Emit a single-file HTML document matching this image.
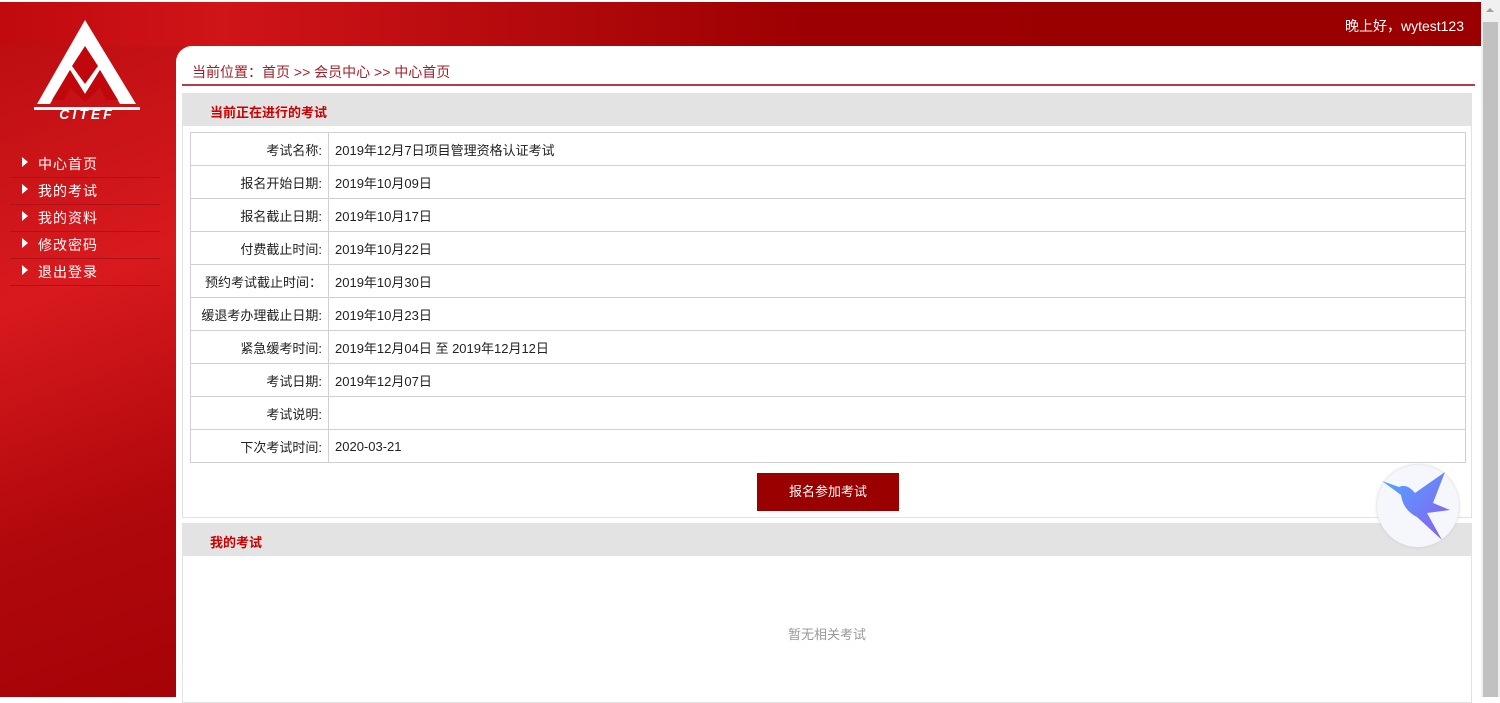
<!DOCTYPE html>
<html><head><meta charset="utf-8"><style>
*{margin:0;padding:0;box-sizing:border-box}
body{width:1500px;height:697px;overflow:hidden;position:relative;background:#fff;font-family:"Liberation Sans","Noto Sans CJK SC",sans-serif;font-size:13px;color:#333}
.bg{position:absolute;left:0;top:0;width:1481px;height:697px;background:linear-gradient(160deg,#b80c10 0%,#d81a1e 25%,#b0080c 45%,#a00005 70%,#9a0003 100%)}
.bg2{position:absolute;left:0;top:0;width:1481px;height:46px;background:linear-gradient(90deg,#c00a0e 0%,#d01418 15%,#b40a0d 35%,#9c0002 55%,#9a0000 100%)}
.topline{position:absolute;left:0;top:0;width:1481px;height:2px;background:#fff}
.greet{position:absolute;right:36px;top:16px;color:#fff;font-size:14px}
.panel{position:absolute;left:176px;top:46px;width:1305px;height:651px;background:#fff;border-top-left-radius:16px}
.crumb{position:absolute;left:192px;top:62px;color:#a0202a;font-size:14px}
.cline{position:absolute;left:182px;top:84px;width:1293px;height:2px;background:#b04048}
.box{position:absolute;left:182px;width:1290px;border:1px solid #e2e2e2}
.hd{position:absolute;left:182px;width:1290px;height:33px;background:#e3e3e3;color:#c00;font-weight:bold;font-size:13px;padding:9px 0 0 28px}
table{position:absolute;left:190px;top:132px;width:1276px;border-collapse:collapse}
td{border:1px solid #d0d0d0;height:33px;font-size:13px;color:#222}
td.l{width:138px;text-align:right;padding-right:6px}
td.r{padding-left:6px}
.btn{position:absolute;left:757px;top:473px;width:142px;height:38px;background:#9a0000;color:#fff;font-size:13px;text-align:center;line-height:38px}
.none{position:absolute;left:788px;top:624px;color:#999;font-size:13px}
.nav{position:absolute;left:10px;width:150px;height:27px;border-bottom:1px solid #b01018;color:#fff;font-size:14px;letter-spacing:1px}
.nav span{position:absolute;left:12px;top:6px;width:0;height:0;border-left:6px solid #fff;border-top:5px solid transparent;border-bottom:5px solid transparent}
.nav b{font-weight:normal;position:absolute;left:28px;top:3px}
.sb{position:absolute;left:1481px;top:0;width:19px;height:697px;background:#f0f0f0}
.th{position:absolute;left:1483px;top:22px;width:15px;height:675px;background:#c1c1c1}
</style></head><body>
<div class="bg"></div><div class="bg2"></div><div class="topline"></div>
<div class="greet">晚上好，wytest123</div>
<svg style="position:absolute;left:32px;top:18px" width="110" height="102" viewBox="0 0 110 102">
<polygon points="53,2 5,86 18,86 38,52 53,76 68,52 88,86 104,86" fill="#fff"/>
<polygon points="53,28 40,48 53,66 66,48" fill="#c0080c"/>
<polygon points="38,52 20,82 32,82 38,70 53,84 68,70 74,82 86,82 68,52 53,76" fill="#c0080c"/>
<rect x="2" y="89" width="106" height="3" fill="#fff"/>
<text x="55" y="101" text-anchor="middle" font-family="Liberation Sans" font-weight="bold" font-style="italic" font-size="14" fill="#fff" letter-spacing="3">CITEF</text>
</svg>
<div class="nav" style="top:151px"><span></span><b>中心首页</b></div>
<div class="nav" style="top:178px"><span></span><b>我的考试</b></div>
<div class="nav" style="top:205px"><span></span><b>我的资料</b></div>
<div class="nav" style="top:232px"><span></span><b>修改密码</b></div>
<div class="nav" style="top:259px"><span></span><b>退出登录</b></div>
<div class="panel"></div>
<div class="crumb">当前位置：首页 &gt;&gt; 会员中心 &gt;&gt; 中心首页</div>
<div class="cline"></div>
<div class="box" style="top:93px;height:425px"></div>
<div class="hd" style="top:93px">当前正在进行的考试</div>
<table>
<tr><td class="l">考试名称:</td><td class="r">2019年12月7日项目管理资格认证考试</td></tr>
<tr><td class="l">报名开始日期:</td><td class="r">2019年10月09日</td></tr>
<tr><td class="l">报名截止日期:</td><td class="r">2019年10月17日</td></tr>
<tr><td class="l">付费截止时间:</td><td class="r">2019年10月22日</td></tr>
<tr><td class="l">预约考试截止时间：</td><td class="r">2019年10月30日</td></tr>
<tr><td class="l">缓退考办理截止日期:</td><td class="r">2019年10月23日</td></tr>
<tr><td class="l">紧急缓考时间:</td><td class="r">2019年12月04日 至 2019年12月12日</td></tr>
<tr><td class="l">考试日期:</td><td class="r">2019年12月07日</td></tr>
<tr><td class="l">考试说明:</td><td class="r"></td></tr>
<tr><td class="l">下次考试时间:</td><td class="r">2020-03-21</td></tr>
</table>
<div class="btn">报名参加考试</div>
<div class="box" style="top:523px;height:180px"></div>
<div class="hd" style="top:523px">我的考试</div>
<div class="none">暂无相关考试</div>
<div style="position:absolute;left:1377px;top:465px;width:82px;height:82px;border-radius:50%;background:#f5f7fc;box-shadow:0 0 3px #ccc"></div>
<svg style="position:absolute;left:1377px;top:465px" width="82" height="82" viewBox="0 0 82 82">
<defs><linearGradient id="g" x1="0" y1="0" x2="1" y2="1"><stop offset="0" stop-color="#4fa8ff"/><stop offset="1" stop-color="#8a5cf0"/></linearGradient></defs>
<path d="M5,16 L22,22 Q30,18 38,28 L68,7 L56,38 L73,45 L50,48 L65,75 L40,52 Q26,45 24,30 Z" fill="url(#g)"/>
</svg>
<div class="sb"></div><div class="th"></div>
<div style="position:absolute;left:1486px;top:8px;width:0;height:0;border-bottom:4px solid #a0a0a0;border-left:4px solid transparent;border-right:4px solid transparent"></div>
</body></html>
